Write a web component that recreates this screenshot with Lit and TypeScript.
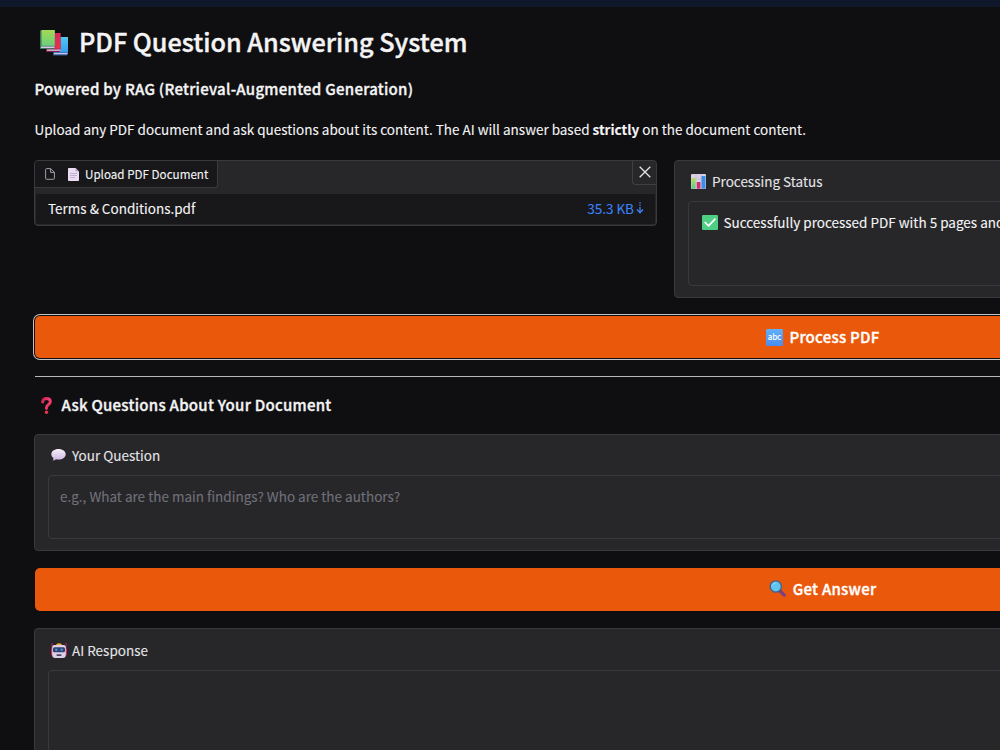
import { LitElement, html, css, svg } from "lit";
import { customElement } from "lit/decorators.js";

const icon = (cls: string, vb: string, body: unknown) =>
  html`<svg class="icon ${cls}" viewBox=${vb} aria-hidden="true">${body}</svg>`;

const books = icon("books", "0 0 28 26", svg`
  <defs>
    <linearGradient id="bg" x1="0" y1="0" x2="0" y2="1"><stop offset="0" stop-color="#a3d955"/><stop offset="1" stop-color="#6bd07c"/></linearGradient>
    <linearGradient id="bb" x1="0" y1="0" x2="0" y2="1"><stop offset="0" stop-color="#50c8ee"/><stop offset="1" stop-color="#3a9cf0"/></linearGradient>
    <linearGradient id="br" x1="0" y1="0" x2="1" y2="1"><stop offset="0" stop-color="#c81e64"/><stop offset="1" stop-color="#ee344c"/></linearGradient>
  </defs>
  <path d="M13 8l1-1h14v16.500l-1 2H13z" fill="#315a8c"/><path d="M14 7h14v15.500H14z" fill="url(#bb)"/><path d="M14 23h13.500v1.300H14z" fill="#cfc0ee"/>
  <path d="M6 4l1-1h13.500v17l-1 2H6z" fill="#7c1f4d"/><path d="M7 3h13.500v15.800H7z" fill="url(#br)"/><path d="M7 19.500h13.500v1.300H7z" fill="#eacdf0"/>
  <path d="M0 1l1-1h13.800v16.500l-1 2.500H0z" fill="#3e7659"/><path d="M1.500 0h13.300v15.800H1.500z" fill="url(#bg)"/><path d="M1 16.500h13.500v1.500H1z" fill="#d5c7ea"/>`);

const fileOutline = icon("file", "0 0 10 12", svg`
  <path d="M1.600.6h4.100l3.700 3.700v6a1 1 0 0 1-1 1H1.600a1 1 0 0 1-1-1V1.600a1 1 0 0 1 1-1zM5.600.8v3.600h3.700" fill="none" stroke="#a1a1aa" stroke-width="1"/>`);

const page = icon("page", "0 0 11 13", svg`
  <path d="M.8 0H7.500L11 3.500v8.700a.8.8 0 0 1-.8.8H.8a.8.8 0 0 1-.8-.8V.8A.8.8 0 0 1 .8 0z" fill="#e9dcf3"/>
  <path d="M7.500 0v2.700a.8.8 0 0 0 .8.8H11z" fill="#b9a3cf"/>
  <path d="M2 5.500h7M2 7.500h7M2 9.500h5" stroke="#b6a5c8" stroke-width=".8"/>`);

const cross = icon("cross", "0 0 12 12", svg`<path d="M.7.700l10.600 10.600M11.300.700L.7 11.300" stroke="#e4e4e7" stroke-width="1.300"/>`);

const down = icon("down", "0 0 8 12", svg`
  <path d="M4 .3v1.400M4 2.700v1.400M4 5v5.500" stroke="#3b82f6" stroke-width="1.300"/><path d="M1 7.500l3 3.200 3-3.200" fill="none" stroke="#3b82f6" stroke-width="1.300"/>`);

const chart = icon("chart", "0 0 15 15", svg`
  <defs><linearGradient id="cg" x1="0" y1="0" x2="0" y2="1"><stop offset="0" stop-color="#b6e352"/><stop offset="1" stop-color="#55c98a"/></linearGradient></defs>
  <rect width="15" height="15" rx="1" fill="#dccfe6"/>
  <path d="M0 5h15M0 10h15M5 0v15M10 0v15" stroke="#b9a9c9" stroke-width=".5"/>
  <rect x=".5" y="4" width="4" height="10.700" fill="url(#cg)"/><rect x="5.800" y="8" width="3.600" height="6.700" fill="#d42a69"/><rect x="10.500" y="2" width="4" height="12.700" fill="#3a8fe6"/>`);

const check = icon("check", "0 0 16 15", svg`
  <rect width="16" height="15" rx="1.200" fill="#4fcf83"/><path d="M3.200 7.500l3.400 3.400L12.900 4.200" fill="none" stroke="#fff" stroke-width="1.700" stroke-linecap="round" stroke-linejoin="round"/>`);

const abc = icon("abc", "0 0 17 17", svg`
  <defs><linearGradient id="ab" x1="0" y1="0" x2="0" y2="1"><stop offset="0" stop-color="#60b0f8"/><stop offset="1" stop-color="#4a8cf2"/></linearGradient></defs>
  <rect width="17" height="17" rx="1.500" fill="url(#ab)"/>
  <text x="8.500" y="11.200" text-anchor="middle" textLength="13.500" font-size="8" fill="#fff" font-family="Noto Sans CJK SC, sans-serif">abc</text>`);

const question = icon("question", "0 0 11 17", svg`
  <defs><linearGradient id="qr" x1="0" y1="0" x2="1" y2="1"><stop offset="0" stop-color="#d21c50"/><stop offset=".5" stop-color="#f0437a"/><stop offset="1" stop-color="#e82c48"/></linearGradient></defs>
  <path d="M1.600 5C1.800 2.700 3.300 1.500 5.500 1.500c2.300 0 3.900 1.300 3.900 3.300 0 2.800-3.900 3-3.900 5.700v1" fill="none" stroke="url(#qr)" stroke-width="2.900" stroke-linecap="round"/><circle cx="5.500" cy="15.200" r="1.700" fill="#f03450"/>`);

const bubble = icon("bubble", "0 0 15 12", svg`
  <defs><linearGradient id="bu" x1="0" y1="0" x2="0" y2="1"><stop offset="0" stop-color="#f6effa"/><stop offset="1" stop-color="#cdb8e2"/></linearGradient></defs>
  <path d="M7.500 0C11.700 0 14.700 2.300 14.700 5.200S11.700 10.500 7.500 10.500c-.9 0-1.800-.1-2.600-.3C4.100 11 2.900 11.500 1.800 11.400c.6-.8.7-1.600.6-2.400C1 8.100.3 6.700.3 5.200.3 2.300 3.300 0 7.500 0z" fill="url(#bu)"/>`);

const lens = icon("lens", "0 0 17 17", svg`
  <path d="M10.800 10.800l4.500 4.300" stroke="#7a3f86" stroke-width="3.300" stroke-linecap="round"/>
  <circle cx="6.800" cy="6.500" r="5.600" fill="#5fc4ee" stroke="#456287" stroke-width="1.400"/><path d="M3.500 5.500a3.700 3.700 0 0 1 3.300-2.600" fill="none" stroke="#8fe0fa" stroke-width="1"/>`);

const robot = icon("robot", "0 0 16 15", svg`
  <path d="M1 0v6M15 0v6" stroke="#a02450" stroke-width="1.200"/>
  <rect x="0" y="5" width="16" height="7.500" rx="1.500" fill="#d02a5d"/>
  <path d="M5 2.500C5.200 1 6.200.3 8 .3s2.800.7 3 2.200z" fill="#f0aa2e"/>
  <path d="M3.500 2h9A2.300 2.300 0 0 1 14.800 4.500V12a3 3 0 0 1-3 3H4.200a3 3 0 0 1-3-3V4.500A2.300 2.300 0 0 1 3.500 2z" fill="#dccfe8"/>
  <rect x="2" y="4.300" width="12" height="4.900" rx="1.500" fill="#34406c"/>
  <circle cx="5.300" cy="6.700" r="1.200" fill="#3a9ae0"/><circle cx="10.700" cy="6.700" r="1.200" fill="#3a9ae0"/>
  <rect x="5.500" y="11.200" width="5" height="1.700" rx=".6" fill="#4e4666"/>`);

@customElement("app-root")
export class AppRoot extends LitElement {
  static styles = css`
    :host { display: block; height: 750px; overflow: hidden; background: #0f0f11; color: #f4f4f5;
      font: 400 13.500px/24px "Noto Sans CJK SC", sans-serif; -webkit-text-stroke: 0.1px currentColor; }
    * { box-sizing: border-box; }
    h1, h2, h3, p { margin: 0; white-space: nowrap; }
    span { white-space: nowrap; }
    .icon { display: block; flex: none; -webkit-text-stroke: 0; letter-spacing: 0; }
    .strip { height: 7px; background: #0f172a; }
    .main { width: 1578px; margin-left: 34px; }
    h1 { display: flex; align-items: center; height: 40px; margin-top: 14px; padding-left: 6px; gap: 11px; font-size: 25.200px; font-weight: 500; -webkit-text-stroke-width: .4px; }
    h1 .books { margin-top: 4px; }
    h2 { height: 24px; margin-top: 16px; padding-left: .5px; font-size: 15px; letter-spacing: .27px; font-weight: 500; -webkit-text-stroke-width: .35px; }
    p { height: 24px; margin-top: 16px; padding-left: .5px; }
    .row { display: flex; align-items: flex-start; gap: 17px; height: 138px; margin-top: 19px; }
    .box { border: 1px solid #3a3a3e; border-radius: 4px; background: #27272a; }
    .upload { flex: none; width: 623px; height: 66px; }
    .bar { display: flex; justify-content: space-between; height: 33px; }
    .tag { display: flex; align-items: center; height: 27px; width: 183px; padding-left: 10px; background: #18181b; border: 1px solid #3a3a3e; border-width: 0 1px 1px 0; font-size: 11.650px; border-radius: 3px 0 3px 0; }
    .tag .page { margin: 0 6px 0 13px; }
    .close { display: flex; align-items: center; justify-content: center; width: 24px; height: 24px; padding-bottom: 1px; border: 1px solid #3f3f46; border-width: 0 0 1px 1px; border-radius: 0 0 0 4px; }
    .entry { display: flex; align-items: center; height: 30px; margin: 0 1px; padding: 0 11px 2px 12px; background: #18181b; }
    .size { margin-left: auto; color: #3b82f6; }
    .down { margin-left: 2px; }
    .status { flex: none; width: 938px; height: 138px; padding: 8px 13px; }
    .label { display: flex; align-items: center; height: 24px; gap: 5px; font-size: 13.500px; color: #e4e4e7; white-space: nowrap; }
    .status .label { gap: 6px; padding-left: 3px; }
    .field { margin-top: 8px; border: 1px solid #3a3a3e; border-radius: 4px; padding: 8px 11px; background: #27272a; }
    .status .field { display: flex; gap: 5.500px; height: 85px; padding-left: 13px; white-space: nowrap; }
    .check { margin-top: 5px; }
    .btn { display: flex; align-items: center; justify-content: center; gap: 6px; height: 43px; margin-left: 1px; padding: 0 1px 2px 0; border-radius: 5px; background: #ea580c; color: #fff; font-size: 15px; letter-spacing: .27px; font-weight: 500; -webkit-text-stroke-width: .35px; }
    .process { margin-top: 18px; height: 42px; padding-bottom: 0; box-shadow: 0 0 0 1px #0f0f11, 0 0 0 2px #c4c4c6; }
    .get .lens { margin: 0 1px 0 -1px; }
    .rule { height: 1px; margin: 18px 0 0 1px; background: #b8b8ba; }
    h3 { display: flex; align-items: center; gap: 10px; height: 24px; margin-top: 16px; padding-left: 6.500px; font-size: 15px; letter-spacing: .27px; font-weight: 500; -webkit-text-stroke-width: .35px; }
    .ask { height: 117px; margin-top: 17px; padding: 8px 13px; }
    .ask .label, .answer .label { padding-left: 3px; }
    .ask .label { gap: 6px; }
    .ask .field { height: 64px; color: #71717a; }
    .get { margin-top: 17px; }
    .answer { height: 300px; margin-top: 17px; padding: 9px 13px; }
    .answer .field { height: 240px; }
    .books { width: 28px; height: 26px; } .file { width: 10px; height: 12px; } .page { width: 11px; height: 13px; }
    .cross { width: 12px; height: 12px; } .down { width: 8px; height: 12px; } .chart { width: 15px; height: 15px; }
    .check { width: 16px; height: 15px; } .abc { width: 17px; height: 17px; } .question { width: 11px; height: 17px; }
    .bubble { width: 15px; height: 12px; } .lens { width: 17px; height: 17px; } .robot { width: 16px; height: 15px; }
  `;
  render() {
    return html`
      <div class="strip"></div>
      <div class="main">
        <h1>${books}<span>PDF Question Answering System</span></h1>
        <h2><span>Powered by RAG (Retrieval-Augmented Generation)</span></h2>
        <p><span>Upload any PDF document and ask questions about its content. The AI will answer based <strong>strictly</strong> on the document content.</span></p>
        <div class="row">
          <div class="box upload">
            <div class="bar"><div class="tag">${fileOutline}${page}<span>Upload PDF Document</span></div><div class="close">${cross}</div></div>
            <div class="entry"><span>Terms &amp; Conditions.pdf</span><span class="size">35.3 KB</span>${down}</div>
          </div>
          <div class="box status">
            <div class="label">${chart}<span>Processing Status</span></div>
            <div class="field">${check}<span>Successfully processed PDF with 5 pages and</span></div>
          </div>
        </div>
        <div class="btn process">${abc}<span>Process PDF</span></div>
        <div class="rule"></div>
        <h3>${question}<span>Ask Questions About Your Document</span></h3>
        <div class="box ask">
          <div class="label">${bubble}<span>Your Question</span></div>
          <div class="field"><span>e.g., What are the main findings? Who are the authors?</span></div>
        </div>
        <div class="btn get">${lens}<span>Get Answer</span></div>
        <div class="box answer">
          <div class="label">${robot}<span>AI Response</span></div>
          <div class="field"></div>
        </div>
      </div>`;
  }
}
